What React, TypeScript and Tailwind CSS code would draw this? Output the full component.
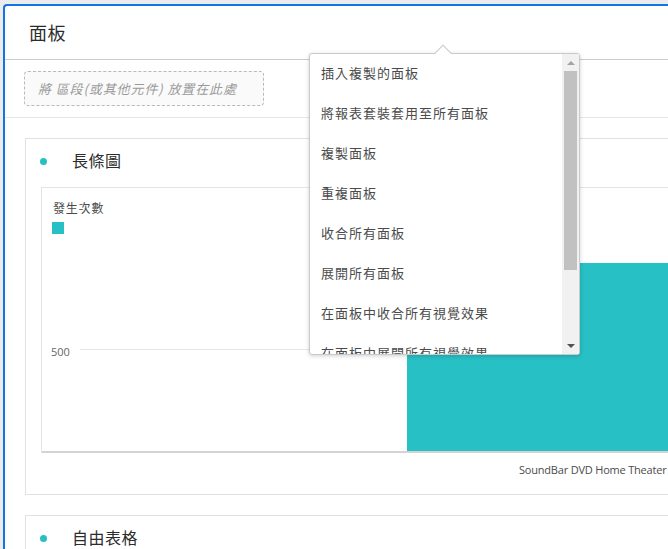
const CJK = "font-['Noto_Sans_CJK_TC','Noto_Sans',sans-serif]";

const menuItems = [
  "插入複製的面板",
  "將報表套裝套用至所有面板",
  "複製面板",
  "重複面板",
  "收合所有面板",
  "展開所有面板",
  "在面板中收合所有視覺效果",
  "在面板中展開所有視覺效果",
];

function PanelMenu() {
  return (
    <div className="absolute left-[309px] top-[53px] h-[302px] w-[271px] rounded-[3px] border border-[#cacaca] bg-white shadow-[0_1px_4px_rgba(0,0,0,0.18)]">
      <div className="absolute left-[127px] top-[-7px] h-[12px] w-[12px] rotate-45 border-l border-t border-[#cacaca] bg-white" />
      <div className="relative flex h-full">
        <div className="flex-1 overflow-hidden">
          {menuItems.map((item) => (
            <div
              key={item}
              className={`flex h-[40px] items-center pb-[2px] pl-[11px] text-[13px] tracking-[1px] text-[#4b4b4b] ${CJK}`}
            >
              {item}
            </div>
          ))}
        </div>
        <div className="flex w-[17px] flex-col items-center bg-[#f1f1f1]">
          <div className="flex h-[17px] items-center justify-center">
            <div className="h-0 w-0 border-x-[4px] border-b-[4px] border-x-transparent border-b-[#a3a3a3]" />
          </div>
          <div className="h-[199px] w-[13px] bg-[#c1c1c1]" />
          <div className="flex-1" />
          <div className="flex h-[17px] items-center justify-center">
            <div className="h-0 w-0 border-x-[4px] border-t-[4px] border-x-transparent border-t-[#505050]" />
          </div>
        </div>
      </div>
    </div>
  );
}

function CardTitle({ title }: { title: string }) {
  return (
    <div className="flex h-[48px] items-center pb-[7px]">
      <span className="ml-[14px] mt-[3px] h-[7px] w-[7px] rounded-full bg-[#26bfc4]" />
      <span className={`ml-[25px] text-[16px] tracking-[0.5px] text-[#2c2c2c] ${CJK}`}>{title}</span>
    </div>
  );
}

function BarChartCard() {
  return (
    <div className="ml-[20px] mt-[20px] h-[357px] border border-[#e1e1e1] bg-white">
      <CardTitle title="長條圖" />
      <div className="ml-[15px] flex h-[266px] flex-col border-l border-t border-[#e4e4e4]">
        <div className="flex flex-1 flex-col border-b-2 border-[#d3d3d3]">
          <div className={`ml-[11px] mt-[12px] text-[12px] leading-[16px] tracking-[0.8px] text-[#4b4b4b] ${CJK}`}>
            發生次數
          </div>
          <div className="ml-[10px] mt-[6px] h-[12px] w-[12px] bg-[#26c0c5]" />
          <div className="relative flex-1">
            <div className="absolute left-[9px] top-[111px] text-[11px] leading-[14px] text-[#666] font-['Open_Sans',sans-serif]">
              500
            </div>
            <div className="absolute left-[38px] right-0 top-[115px] h-px bg-[#e6e6e6]" />
            <div className="absolute bottom-0 left-[365px] right-0 top-[29px] bg-[#26c0c5]" />
          </div>
        </div>
      </div>
      <div className="ml-[493px] mt-[10px] whitespace-nowrap text-[11px] leading-[14px] tracking-[-0.2px] text-[#4b4b4b] font-['Open_Sans',sans-serif]">
        SoundBar DVD Home Theater ▾
      </div>
    </div>
  );
}

export default function App() {
  return (
    <div className="relative h-[549px] w-[668px] overflow-hidden bg-[#ececec]">
      <div className="ml-[3px] mt-[4px] h-[600px] w-[720px] rounded-tl-[4px] border-l-2 border-t-2 border-[#1473e6] bg-white">
        <div className="flex h-[54px] items-center border-b border-[#cdcdcd] pb-[1px] pl-[24px]">
          <span className={`text-[18px] tracking-[0.5px] text-[#2c2c2c] ${CJK}`}>面板</span>
        </div>
        <div className="border-b border-[#e6e6e6] pb-[11px] pl-[19px] pt-[11px]">
          <div className="flex h-[35px] w-[240px] items-center rounded-[4px] border border-dashed border-[#b9b9b9] bg-[#fafafa] pl-[13px]">
            <span className={`whitespace-pre text-[13px] italic tracking-[0.9px] text-[#9a9a9a] ${CJK}`}>將 區段(或其他元件) 放置在此處</span>
          </div>
        </div>
        <BarChartCard />
        <div className="ml-[20px] mt-[20px] h-[80px] border border-[#e1e1e1] bg-white">
          <CardTitle title="自由表格" />
        </div>
      </div>
      <PanelMenu />
    </div>
  );
}
